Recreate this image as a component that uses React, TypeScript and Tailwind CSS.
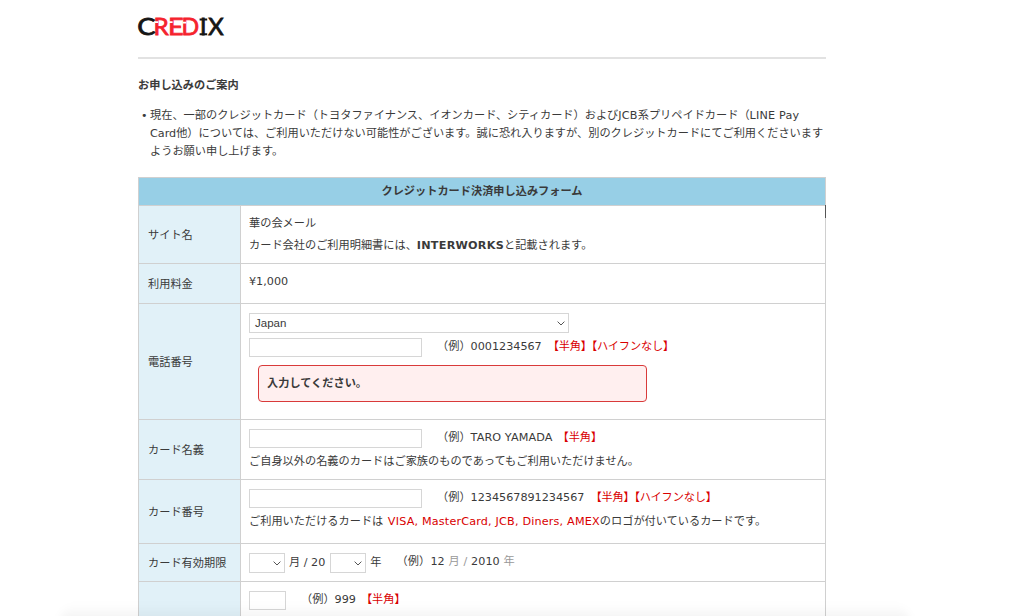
import type { ReactNode } from "react";

const Logo = () => (
  <svg
    viewBox="0 0 86 18"
    className="block h-[18px] w-[86px] overflow-visible"
    role="img"
    aria-label="CREDIX"
  >
    <g fontFamily="Lato, sans-serif" fontSize="23" strokeWidth=".8">
      <g fill="#161616" stroke="#161616">
        <text x="-.8" y="17" textLength="18.3" lengthAdjust="spacingAndGlyphs">C</text>
        <text x="62.1" y="17">I</text>
        <text x="70.3" y="17" textLength="15.4" lengthAdjust="spacingAndGlyphs">X</text>
      </g>
      <g fill="#f5232d" stroke="#f5232d">
        <text x="15.6" y="17" textLength="15.2" lengthAdjust="spacingAndGlyphs">R</text>
        <text x="30" y="17" textLength="15.6" lengthAdjust="spacingAndGlyphs">E</text>
        <text x="43.6" y="17" textLength="17.6" lengthAdjust="spacingAndGlyphs">D</text>
      </g>
    </g>
    {/* serifs of the I and the stencil cuts of the red letters */}
    <path d="M61.6 1.5h7.6M61.6 16.3h7.6" stroke="#161616" strokeWidth="1.9" />
    <path d="M16.6 4.1h3.6M31 4.1h3.6M44.8 4.6h3.4" stroke="#fff" strokeWidth="1.8" />
  </svg>
);

const Chevron = () => (
  <svg viewBox="0 0 8 5" className="h-[5px] w-2" fill="none" stroke="#555" strokeWidth="1">
    <path d="M.6.6 4 4 7.4.6" />
  </svg>
);

const TextBox = ({ width }: { width: string }) => (
  <input type="text" className={`h-[19px] border border-[#d6d6d6] bg-transparent ${width}`} />
);

const SelectBox = ({ width, value }: { width: string; value?: string }) => (
  <button
    type="button"
    className={`flex h-5 items-center justify-between border border-[#d6d6d6] bg-white pr-[3px] pl-[5px] font-['Liberation_Sans',sans-serif] text-[11.5px] ${width}`}
  >
    <span>{value}</span>
    <Chevron />
  </button>
);

const Red = ({ children }: { children: ReactNode }) => (
  <span className="text-[#d90000]">{children}</span>
);

interface RowProps {
  label?: string;
  height: string;
  children: ReactNode;
}

const Row = ({ label, height, children }: RowProps) => (
  <div className={`flex border-b border-[#d0d0d0] ${height}`}>
    <div className="flex w-[102px] shrink-0 items-center border-r border-[#d0d0d0] bg-[#e1f1f8] pt-0.5 pl-[9px]">
      {label}
    </div>
    <div className="flex-1 pl-2">{children}</div>
  </div>
);

const App = () => {
  return (
    <div className="relative h-[616px] overflow-hidden bg-white font-['DejaVu_Sans','Noto_Sans_CJK_JP',sans-serif] text-[11.19px] leading-[18px] whitespace-nowrap text-[#3a3a3a]">
      <div className="ml-[138px] w-[688px]">
        <header className="h-[59px] border-b-2 border-[#e2e2e2] pt-[18px]">
          <Logo />
        </header>

        <h1 className="mt-[18px] font-bold">お申し込みのご案内</h1>
        <div className="mt-3 flex">
          <span className="w-3 pl-[3px] text-[11px]">•</span>
          <p>
            現在、一部のクレジットカード（トヨタファイナンス、イオンカード、シティカード）および
            <span className="tracking-[0.2px]">JCB</span>系プリペイドカード（
            <span className="tracking-[0.2px]">LINE Pay</span>
            <br />
            Card他）については、ご利用いただけない可能性がございます。誠に恐れ入りますが、別のクレジットカードにてご利用くださいます
            <br />
            ようお願い申し上げます。
          </p>
        </div>

        <main className="mt-4 border border-[#d0d0d0]">
          <h2 className="flex h-7 items-center justify-center border-b border-[#d0d0d0] bg-[#97cfe6] font-bold">
            クレジットカード決済申し込みフォーム
          </h2>

          <Row label="サイト名" height="h-[58px]">
            <p className="mt-[9px]">華の会メール</p>
            <p className="mt-1">
              カード会社のご利用明細書には、<b className="tracking-[0.25px]">INTERWORKS</b>
              と記載されます。
            </p>
          </Row>

          <Row label="利用料金" height="h-10">
            <p className="mt-[9px]">¥1,000</p>
          </Row>

          <Row label="電話番号" height="h-[116px]">
            <div className="mt-[9px]">
              <SelectBox width="w-80" value="Japan" />
            </div>
            <div className="mt-[5px] flex h-[19px]">
              <TextBox width="w-[173px]" />
              <span className="ml-[15px]">（例）0001234567</span>
              <span className="ml-[6px] tracking-[-0.2px]">
                <Red>【半角】【ハイフンなし】</Red>
              </span>
            </div>
            <div className="mt-2 ml-[9px] flex h-[37px] w-[389px] items-center rounded-[4px] border border-[#d93a3a] bg-[#ffefef] pl-2 font-bold">
              入力してください。
            </div>
          </Row>

          <Row label="カード名義" height="h-[60px]">
            <div className="mt-[9px] flex h-[19px]">
              <TextBox width="w-[173px]" />
              <span className="ml-[15px]">
                （例）<span className="tracking-[0.1px]">TARO YAMADA</span>
              </span>
              <span className="ml-[5px]">
                <Red>【半角】</Red>
              </span>
            </div>
            <p className="mt-[5px]">ご自身以外の名義のカードはご家族のものであってもご利用いただけません。</p>
          </Row>

          <Row label="カード番号" height="h-16">
            <div className="mt-[9px] flex h-[19px]">
              <TextBox width="w-[173px]" />
              <span className="ml-[15px]">（例）1234567891234567</span>
              <span className="ml-[6px] tracking-[-0.2px]">
                <Red>【半角】【ハイフンなし】</Red>
              </span>
            </div>
            <p className="mt-[5px]">
              ご利用いただけるカードは{" "}
              <span className="ml-px tracking-[0.18px]">
                <Red>VISA, MasterCard, JCB, Diners, AMEX</Red>
              </span>
              のロゴが付いているカードです。
            </p>
          </Row>

          <Row label="カード有効期限" height="h-[38px]">
            <div className="mt-[9px] flex h-5">
              <SelectBox width="w-9" />
              <span className="mt-px ml-1">月 / 20</span>
              <span className="ml-[5px]">
                <SelectBox width="w-9" />
              </span>
              <span className="mt-px ml-1">年</span>
              <span className="ml-[15px] tracking-[0.1px]">
                （例）12 <span className="text-[#999]">月 /</span> 2010{" "}
                <span className="text-[#999]">年</span>
              </span>
            </div>
          </Row>

          <Row height="h-[60px]">
            <div className="mt-[9px] flex h-[19px]">
              <TextBox width="w-[37px]" />
              <span className="ml-[15px]">（例）999</span>
              <span className="ml-[5px]">
                <Red>【半角】</Red>
              </span>
            </div>
          </Row>
        </main>
      </div>

      {/* text caret at the table's right edge */}
      <div className="absolute top-[205px] left-[825px] h-[13px] w-px bg-[#555]" />
      {/* shade of the bar below the fold */}
      <div className="absolute -bottom-2 left-[60px] h-5 w-[850px] rounded-t-[20px] bg-linear-to-b from-transparent to-black/6 blur-[4px]" />
    </div>
  );
};

export default App;
